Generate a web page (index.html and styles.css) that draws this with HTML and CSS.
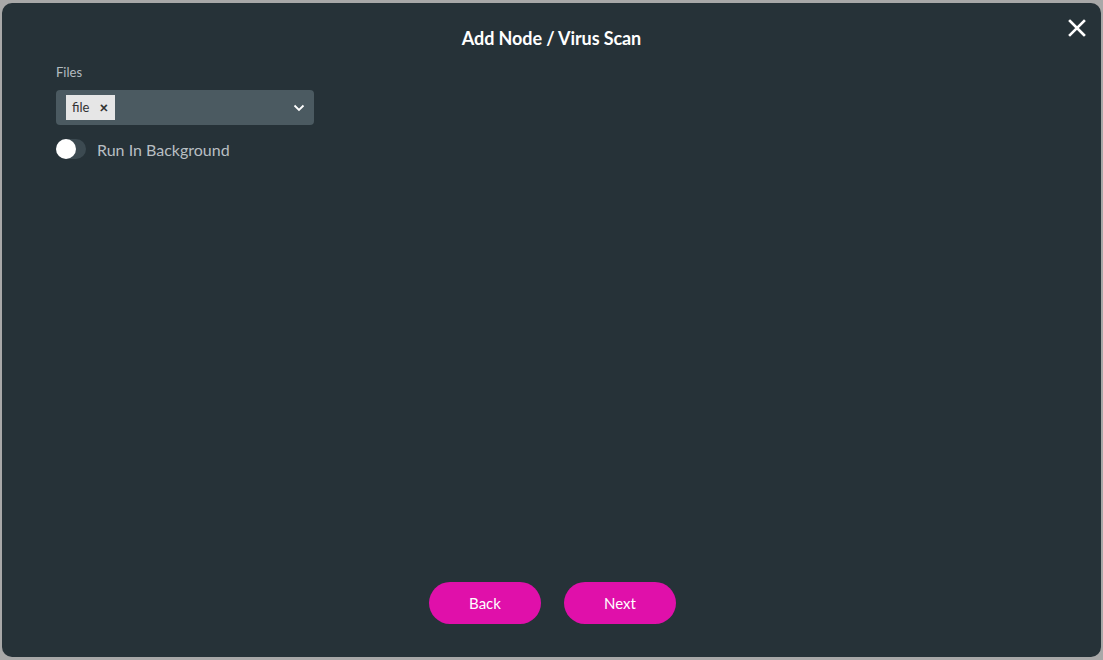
FILE: index.html
```html
<!DOCTYPE html>
<html>
<head>
<meta charset="utf-8">
<link rel="stylesheet" href="styles.css">
</head>
<body>
<div class="dialog">
  <header class="head">
    <h1 class="title">Add Node / Virus Scan</h1>
    <button class="close" aria-label="Close">
      <svg width="18" height="18" viewBox="0 0 18 18"><path d="M2 2L16 16M16 2L2 16" stroke="#fff" stroke-width="2.6" stroke-linecap="square"/></svg>
    </button>
  </header>
  <div class="body">
    <label class="label">Files</label>
    <div class="select">
      <span class="chip">file <span class="chip-x">×</span></span>
      <svg class="chev" width="12" height="8" viewBox="0 0 12 8"><path d="M1.5 1.5L6 6L10.5 1.5" fill="none" stroke="#fff" stroke-width="1.8"/></svg>
    </div>
    <div class="toggle-row">
      <span class="toggle"><span class="knob"></span></span>
      <span class="toggle-label">Run In Background</span>
    </div>
  </div>
  <footer class="foot">
    <button class="btn">Back</button>
    <button class="btn">Next</button>
  </footer>
</div>
</body>
</html>
```
FILE: styles.css
```css
html, body {
  margin: 0;
  padding: 0;
  background: #a8a8a8;
  height: 660px;
  overflow: hidden;
}
body {
  padding: 3px 2px 3px 2px;
  box-sizing: border-box;
  font-family: Lato, "Open Sans", sans-serif;
}
.dialog {
  background: #263238;
  height: 654px;
  border-radius: 10px;
  display: flex;
  flex-direction: column;
  box-sizing: border-box;
  padding: 0 54px;
}
.head {
  position: relative;
  height: 68px;
  display: flex;
  justify-content: center;
}
.title {
  margin: 0;
  padding-top: 24px;
  font-size: 18px;
  font-weight: 700;
  color: #fff;
  letter-spacing: -0.1px;
}
.close {
  position: absolute;
  right: -39px;
  top: 16px;
  background: none;
  border: 0;
  padding: 0;
  width: 18px;
  height: 18px;
  cursor: pointer;
}
.close svg { display: block; }
.body {
  flex: 1;
  display: flex;
  flex-direction: column;
  align-items: flex-start;
}
.label {
  font-size: 13px;
  color: #b4bcc0;
  margin-top: -7px;
  line-height: 16px;
}
.select {
  margin-top: 10px;
  width: 258px;
  height: 35px;
  background: #4b5a61;
  border-radius: 4px;
  display: flex;
  align-items: center;
  padding: 0 10px;
  box-sizing: border-box;
  justify-content: space-between;
}
.chip {
  background: #e6e6e6;
  color: #333;
  font-size: 13px;
  height: 25px;
  line-height: 25px;
  padding: 0 6px;
  width: 49px;
  box-sizing: border-box;
  display: flex;
  gap: 10px;
}
.chip-x {
  font-weight: 900;
  font-size: 15px;
}
.chev { margin-right: -1px; }
.toggle-row {
  margin-top: 14px;
  display: flex;
  align-items: center;
  gap: 11px;
}
.toggle {
  width: 30px;
  height: 20px;
  background: #3c4a51;
  border-radius: 10px;
  position: relative;
}
.knob {
  position: absolute;
  left: 0;
  top: 0;
  width: 20px;
  height: 20px;
  border-radius: 50%;
  background: #fff;
}
.toggle-label {
  font-size: 16px;
  color: #b8bfc3;
}
.foot {
  display: flex;
  justify-content: center;
  gap: 23px;
  padding-bottom: 33px;
  padding-left: 2px;
}
.btn {
  width: 112px;
  height: 42px;
  border-radius: 21px;
  border: 0;
  background: #e010aa;
  color: #fff;
  font-family: Lato, sans-serif;
  font-size: 15px;
  cursor: pointer;
}
```
